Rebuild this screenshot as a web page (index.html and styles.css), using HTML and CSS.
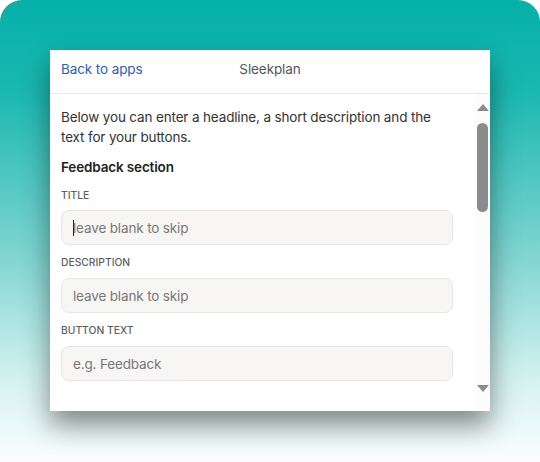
FILE: index.html
```html
<!DOCTYPE html>
<html>
<head>
    <title>Sleekplan - Settings</title>
    <link rel="stylesheet" href="styles.css">
</head>
<body>
<div class="stage">
    <div class="panel">
        <div class="header">
            <a class="back" href="javascript:;">Back to apps</a>
            <div class="title">Sleekplan</div>
            <div></div>
        </div>
        <div class="body">
            <div class="content">
                <p class="intro">Below you can enter a headline, a short description and the text for your buttons.</p>
                <div class="section">Feedback section</div>

                <div class="label">Title</div>
                <div class="field"><span class="caret"></span><span class="placeholder">leave blank to skip</span></div>

                <div class="label">Description</div>
                <div class="field"><span class="placeholder">leave blank to skip</span></div>

                <div class="label">Button text</div>
                <div class="field"><span class="placeholder">e.g. Feedback</span></div>
            </div>
            <div class="scrollbar">
                <div class="arrow up"></div>
                <div class="thumb"></div>
                <div class="track"></div>
                <div class="arrow down"></div>
            </div>
        </div>
    </div>
</div>
</body>
</html>
```

FILE: styles.css
```css
body { margin: 0; background: #ffffff; font-family: Inter, "Noto Sans", sans-serif; }
.stage { width: 540px; height: 462px; box-sizing: border-box; padding: 50px 0 0 50px; border-radius: 22px 22px 0 0; background: linear-gradient(#05b1a8 0%, #1ab8b0 20%, #7ed5d1 55%, #d4f1f0 82%, #fbfefe 100%); }
.panel { width: 440px; height: 361px; background: #ffffff; box-shadow: 0 14px 26px rgba(0, 0, 0, 0.45); display: flex; flex-direction: column; }
.header { height: 44px; box-sizing: border-box; padding: 0 11px 5px; border-bottom: 1px solid #e9e9e9; display: grid; grid-template-columns: 1fr auto 1fr; align-items: center; font-size: 13.5px; letter-spacing: -0.1px; }
.back { color: #2c5fae; text-decoration: none; }
.title { color: #555555; }
.body { flex: 1; display: flex; overflow: hidden; }
.content { flex: 1; padding: 14px 22px 0 11px; color: #333333; font-size: 13.5px; letter-spacing: -0.15px; }
.intro { margin: 0; line-height: 19.5px; }
.section { margin-top: 10px; font-weight: 600; line-height: 20px; color: #222222; }
.label { margin-top: 10px; font-size: 10.3px; font-weight: 500; line-height: 14px; text-transform: uppercase; color: #5f5f5f; letter-spacing: 0; }
.section + .label { margin-top: 11px; }
.field { margin-top: 8px; height: 35px; box-sizing: border-box; border: 1px solid #e6e6e6; border-radius: 8px; background: #f7f6f5; padding: 0 11px; display: flex; align-items: center; }
.field + .label + .field { margin-top: 9px; }
.placeholder { color: #777777; font-size: 13.5px; }
.caret { width: 1px; height: 16px; background: #222222; margin-right: -1px; }
.scrollbar { width: 15px; display: flex; flex-direction: column; align-items: center; padding: 10px 0 19px; box-sizing: border-box; background: #fcfcfc; }
.arrow { width: 0; height: 0; border-left: 6px solid transparent; border-right: 6px solid transparent; }
.up { border-bottom: 7px solid #8c8c8c; }
.down { border-top: 7px solid #8c8c8c; }
.thumb { margin-top: 12px; width: 11px; height: 89px; border-radius: 6px; background: #8c8c8c; }
.track { flex: 1; }
```
